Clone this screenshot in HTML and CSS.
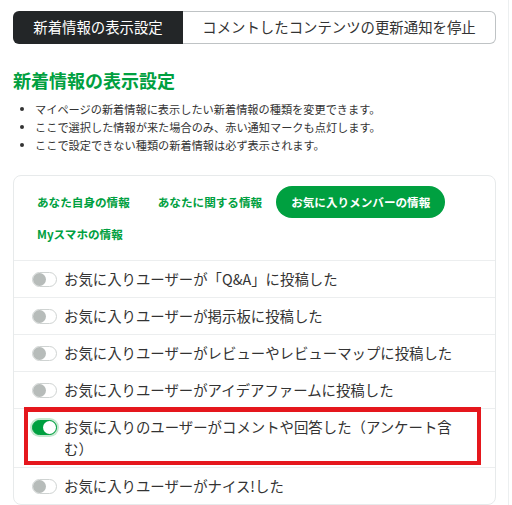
FILE: index.html
```html
<!DOCTYPE html>
<html lang="ja">
<head>
<meta charset="utf-8">
<link rel="stylesheet" href="styles.css">
</head>
<body>
<div class="page">
  <div class="seg">
    <div class="seg-item active">新着情報の表示設定</div>
    <div class="seg-item">コメントしたコンテンツの更新通知を停止</div>
  </div>
  <h2 class="title">新着情報の表示設定</h2>
  <ul class="notes">
    <li>マイページの新着情報に表示したい新着情報の種類を変更できます。</li>
    <li>ここで選択した情報が来た場合のみ、赤い通知マークも点灯します。</li>
    <li>ここで設定できない種類の新着情報は必ず表示されます。</li>
  </ul>
  <div class="card">
    <div class="tabs">
      <span class="tab">あなた自身の情報</span>
      <span class="tab">あなたに関する情報</span>
      <span class="tab current">お気に入りメンバーの情報</span>
      <span class="tab">Myスマホの情報</span>
    </div>
    <div class="row"><span class="toggle"></span><span class="label">お気に入りユーザーが「Q&amp;A」に投稿した</span></div>
    <div class="row"><span class="toggle"></span><span class="label">お気に入りユーザーが掲示板に投稿した</span></div>
    <div class="row"><span class="toggle"></span><span class="label">お気に入りユーザーがレビューやレビューマップに投稿した</span></div>
    <div class="row"><span class="toggle"></span><span class="label">お気に入りユーザーがアイデアファームに投稿した</span></div>
    <div class="row highlight"><span class="toggle on"></span><span class="label">お気に入りのユーザーがコメントや回答した（アンケート含む）</span><span class="mark"></span></div>
    <div class="row"><span class="toggle"></span><span class="label">お気に入りユーザーがナイス!した</span></div>
  </div>
</div>
</body>
</html>
```
FILE: styles.css
```css
html, body {
  margin: 0;
  padding: 0;
  background: #fff;
}
body {
  font-family: "Noto Sans CJK JP", "Noto Sans", sans-serif;
  color: #333;
  height: 505px;
  overflow: hidden;
}
.page {
  width: 483px;
  padding: 11px 12px 0 13px;
  border-right: 1px solid #eceff0;
  min-height: 494px;
}
.seg {
  display: flex;
  height: 33px;
}
.seg-item {
  display: flex;
  align-items: center;
  justify-content: center;
  font-size: 14.4px;
  line-height: 1;
  box-sizing: border-box;
}
.seg-item.active {
  width: 170px;
  background: #232628;
  color: #fff;
  border-radius: 6px 0 0 6px;
}
.seg-item:not(.active) {
  flex: 1;
  color: #333;
  border: 1px solid #bfc3c5;
  border-left: none;
  border-radius: 0 6px 6px 0;
}
.title {
  margin: 24px 0 0;
  font-size: 18px;
  line-height: 24px;
  font-weight: bold;
  color: #00a040;
}
.notes {
  list-style: none;
  margin: 8px 0 0;
  padding: 0;
}
.notes li {
  position: relative;
  padding-left: 22px;
  font-size: 11.2px;
  line-height: 18px;
  color: #333;
}
.notes li::before {
  content: "";
  position: absolute;
  left: 7px;
  top: 7px;
  width: 4px;
  height: 4px;
  border-radius: 50%;
  background: #333;
}
.card {
  margin-top: 21px;
  border: 1px solid #e7eaeb;
  border-radius: 8px;
}
.tabs {
  display: flex;
  flex-wrap: wrap;
  padding: 10px 9px 10px 9px;
}
.tab {
  height: 32px;
  line-height: 32px;
  padding: 0 14px;
  font-size: 11.6px;
  font-weight: bold;
  color: #00a040;
  border-radius: 16px;
  white-space: nowrap;
}
.tab.current {
  background: #00a040;
  color: #fff;
  padding: 0 15px;
}
.row {
  position: relative;
  display: flex;
  align-items: flex-start;
  gap: 7px;
  border-top: 1px solid #eceeef;
  padding: 7px 35px 7px 18px;
}
.label {
  font-size: 14.4px;
  line-height: 22px;
  color: #333;
}
.toggle {
  flex: none;
  position: relative;
  width: 25px;
  height: 15px;
  margin-top: 4px;
  box-sizing: border-box;
  border: 1px solid #cfd3d2;
  border-radius: 8px;
  background: #fff;
}
.toggle::after {
  content: "";
  position: absolute;
  left: 0;
  top: 0;
  width: 13px;
  height: 13px;
  border-radius: 50%;
  background: #b7bcba;
}
.toggle.on {
  background: #00a040;
  border-color: #00a040;
  box-shadow: 0 0 0 2px #c4e8cf;
}
.toggle.on::after {
  left: auto;
  right: 0;
  background: #fff;
}
.mark {
  position: absolute;
  left: 10px;
  top: -2px;
  width: 457px;
  height: 58px;
  box-sizing: border-box;
  border: 4px solid #e5171d;
  border-top-width: 5px;
}
```
